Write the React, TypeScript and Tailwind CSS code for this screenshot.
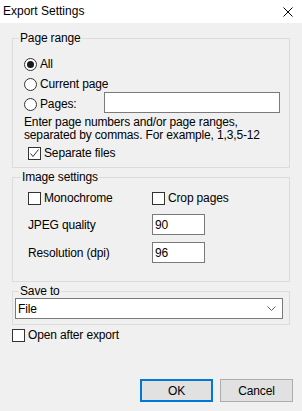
import React from "react";

function Radio({ checked }: { checked?: boolean }) {
  return (
    <span className="flex h-[13px] w-[13px] shrink-0 items-center justify-center rounded-full border border-[#333333] bg-white">
      {checked && <span className="h-[7px] w-[7px] rounded-full bg-[#1a1a1a]" />}
    </span>
  );
}

function Check({ checked }: { checked?: boolean }) {
  return (
    <span className="flex h-[13px] w-[13px] shrink-0 items-center justify-center border border-[#333333] bg-white">
      {checked && (
        <svg width="11" height="11" viewBox="0 0 11 11">
          <path d="M1.5 5.5 L4 8.5 L9.5 1.5" fill="none" stroke="#333333" strokeWidth="1" />
        </svg>
      )}
    </span>
  );
}

export default function App() {
  return (
    <div className="flex h-[411px] w-[302px] flex-col bg-[#f0f0f0] font-['Liberation_Sans',sans-serif] text-[12px] tracking-[-0.15px] text-black">
      <div className="flex h-[23px] shrink-0 items-center justify-between bg-white pl-[3px] pr-[9px]">
        <span className="leading-[15px] tracking-normal">Export Settings</span>
        <svg width="10" height="10" viewBox="0 0 10 10">
          <path d="M0.5 0.5 L9.5 9.5 M9.5 0.5 L0.5 9.5" stroke="#000" strokeWidth="1" />
        </svg>
      </div>

      <div className="flex flex-col px-[12px] pt-[8px]">
        <fieldset className="border border-[#dcdcdc]">
          <legend className="ml-[6px] px-[1px] leading-[15px]">Page range</legend>
          <div className="flex flex-col pb-[4px] pl-[11px] pt-[8px]">
            <div className="flex h-[20px] items-center gap-[3px]">
              <Radio checked />
              <span>All</span>
            </div>
            <div className="flex h-[20px] items-center gap-[3px]">
              <Radio />
              <span>Current page</span>
            </div>
            <div className="flex h-[20px] items-center">
              <Radio />
              <span className="ml-[3px] w-[64px]">Pages:</span>
              <span className="mb-[4px] h-[21px] w-[176px] border border-[#7a7a7a] bg-white" />
            </div>
            <div className="mt-[2px] leading-[13px]">
              Enter page numbers and/or page ranges,
              <br />
              separated by commas. For example, 1,3,5-12
            </div>
            <div className="mt-[1px] flex h-[20px] items-center gap-[3px] pl-[4px]">
              <Check checked />
              <span>Separate files</span>
            </div>
          </div>
        </fieldset>

        <fieldset className="mt-[2px] border border-[#dcdcdc]">
          <legend className="ml-[8px] px-[1px] leading-[15px]">Image settings</legend>
          <div className="flex flex-col pb-[18px] pl-[15px] pt-[3px]">
            <div className="flex h-[20px] items-center">
              <div className="flex w-[124px] items-center gap-[3px]">
                <Check />
                <span>Monochrome</span>
              </div>
              <div className="flex items-center gap-[3px]">
                <Check />
                <span>Crop pages</span>
              </div>
            </div>
            <div className="mt-[6px] flex items-center">
              <span className="w-[124px]">JPEG quality</span>
              <span className="flex h-[21px] w-[53px] items-center border border-[#7a7a7a] bg-white pl-[2px]">90</span>
            </div>
            <div className="mt-[7px] flex items-center">
              <span className="w-[124px]">Resolution (dpi)</span>
              <span className="flex h-[21px] w-[53px] items-center border border-[#7a7a7a] bg-white pl-[2px]">96</span>
            </div>
          </div>
        </fieldset>

        <fieldset className="mt-[2px] border border-[#dcdcdc]">
          <legend className="ml-[6px] px-[1px] leading-[15px]">Save to</legend>
          <div className="-mt-[1px] pb-[5px] pl-[2px]">
            <div className="flex h-[21px] w-[268px] items-center justify-between border border-[#7a7a7a] bg-white pl-[2px] pr-[6px]">
              <span>File</span>
              <svg width="9" height="5" viewBox="0 0 9 5">
                <path d="M0.5 0.5 L4.5 4.5 L8.5 0.5" fill="none" stroke="#606060" strokeWidth="1" />
              </svg>
            </div>
          </div>
        </fieldset>

        <div className="flex h-[20px] items-center gap-[3px]">
          <Check />
          <span>Open after export</span>
        </div>
      </div>

      <div className="flex-1" />

      <div className="flex justify-end gap-[7px] pb-[9px] pr-[9px]">
        <button className="flex h-[23px] w-[73px] items-center justify-center border-2 border-[#0078d7] bg-[#e1e1e1]">
          OK
        </button>
        <button className="flex h-[23px] w-[73px] items-center justify-center border border-[#adadad] bg-[#e1e1e1]">
          Cancel
        </button>
      </div>
    </div>
  );
}
